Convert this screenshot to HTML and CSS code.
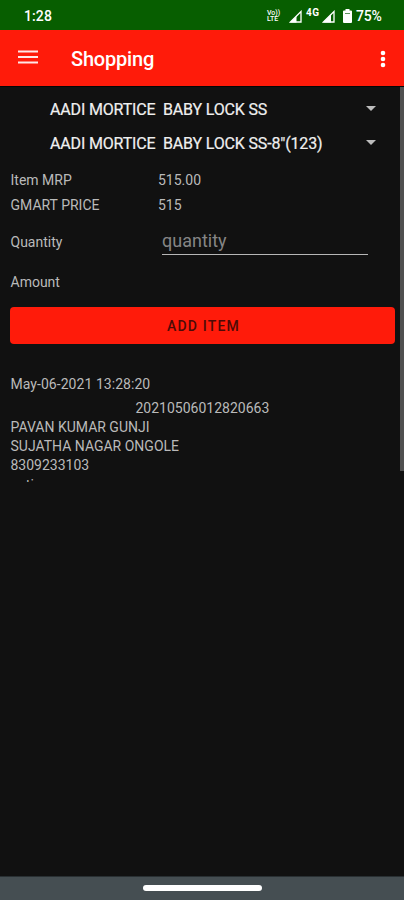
FILE: index.html
```
<!DOCTYPE html>
<html lang="en">
<head>
<meta charset="utf-8">
<title>Shopping</title>
<link rel="stylesheet" href="styles.css">
</head>
<body>
<div class="screen">
  <div class="status">
    <span class="clock">1:28</span>
    <span class="volte"><span>Vo))</span><span class="lte">LTE</span></span>
    <svg class="signal" width="13" height="13" viewBox="0 0 13 13"><path d="M1.5 12H12V1.5Z" fill="none" stroke="#fff" stroke-width="1.3"/><path d="M1 12.5 7.5 6V12.5Z" fill="#fff"/></svg>
    <span class="network">4G</span>
    <svg class="signal-two" width="13" height="13" viewBox="0 0 13 13"><path d="M1.5 12H12V1.5Z" fill="none" stroke="#fff" stroke-width="1.3"/><path d="M1 12.5 9 4.5V12.5Z" fill="#fff"/></svg>
    <svg class="battery" width="9" height="14" viewBox="0 0 9 14"><path d="M2.5 0h4v1.5H8a1 1 0 0 1 1 1V13a1 1 0 0 1-1 1H1a1 1 0 0 1-1-1V2.500a1 1 0 0 1 1-1h1.500Z" fill="#fff"/><path d="M2 4.500h5" stroke="#5c935c" stroke-width="1"/></svg>
    <span class="percent">75%</span>
  </div>
  <header class="appbar">
    <svg class="menu" width="20" height="14" viewBox="0 0 20 14"><path d="M0 1.500H20M0 7H20M0 12.500H20" stroke="#fff" stroke-opacity=".9" stroke-width="2"/></svg>
    <h1 class="title">Shopping</h1>
    <svg class="more" width="6" height="18" viewBox="0 0 6 18"><g fill="#fff"><circle cx="3" cy="3" r="2.300"/><circle cx="3" cy="9" r="2.300"/><circle cx="3" cy="15" r="2.300"/></g></svg>
  </header>
  <main class="content">
    <div class="spinner first"><span>AADI MORTICE&nbsp; BABY LOCK SS</span><i class="caret"></i></div>
    <div class="spinner"><span>AADI MORTICE&nbsp; BABY LOCK SS-8"(123)</span><i class="caret"></i></div>
    <div class="field mrp"><span>Item MRP</span><span>515.00</span></div>
    <div class="field price"><span>GMART PRICE</span><span>515</span></div>
    <div class="field quantity"><span>Quantity</span><span class="input">quantity</span></div>
    <div class="field amount"><span>Amount</span></div>
    <div class="button">ADD ITEM</div>
    <div class="date">May-06-2021 13:28:20</div>
    <div class="order">20210506012820663</div>
    <div class="line">PAVAN KUMAR GUNJI</div>
    <div class="line">SUJATHA NAGAR ONGOLE</div>
    <div class="line phone">8309233103</div>
    <div class="line">native</div>
    <div class="scrollbar"></div>
  </main>
  <footer class="navbar"><div class="handle"></div></footer>
</div>
</body>
</html>
```
FILE: styles.css
```
* { box-sizing: border-box; }
body { margin: 0; background: #111; font-family: Roboto, "Liberation Sans", sans-serif; }
.screen { width: 404px; height: 900px; display: flex; flex-direction: column; background: #111; overflow: hidden; }
.status { height: 30px; flex: none; display: flex; align-items: center; padding: 2px 0 0 24px; background: #075e00; color: #fff; }
.clock { width: 243px; font-size: 14px; font-weight: 500; letter-spacing: 0.1px; }
.volte { width: 15px; display: flex; flex-direction: column; font-size: 7px; line-height: 6px; font-weight: 500; white-space: nowrap; }
.signal { margin-left: 7px; }
.network { width: 15px; margin: -6px 0 0 4px; font-size: 10px; font-weight: 700; line-height: 10px; letter-spacing: 0.5px; }
.signal-two { margin-left: 1px; }
.battery { margin-left: 8px; }
.percent { margin-left: 4px; font-size: 14px; font-weight: 500; letter-spacing: -0.2px; }
.appbar { height: 56px; flex: none; display: flex; align-items: center; padding: 2px 18px 0 18px; background: #ff1b0a; color: #fff; }
.menu { width: 20px; margin-top: -4px; }
.title { margin: 0 0 0 33px; font-size: 20px; font-weight: 500; letter-spacing: -0.2px; }
.more { margin-left: auto; }
.content { position: relative; height: 396px; flex: none; overflow: hidden; padding: 5px 9px 0 10px; border-top: 1px solid #060606; color: #bababa; font-size: 14px; }
.spinner { height: 34px; display: flex; align-items: center; justify-content: space-between; padding: 0 19px 0 40px; color: #f0f0f0; font-size: 16px; letter-spacing: -0.16px; white-space: nowrap; -webkit-text-stroke: 0.2px #f0f0f0; }
.caret { width: 10px; height: 5px; margin-top: -1px; background: #bdbdbd; clip-path: polygon(0 0, 100% 0, 50% 100%); }
.field { display: grid; grid-template-columns: 148px 1fr; align-items: center; height: 24px; }
.mrp { margin-top: 8px; }
.price { padding-top: 1px; }
.quantity { height: 37px; margin-top: 7px; grid-template-columns: 152px 206px; }
.input { height: 25px; align-self: start; margin-top: 7px; border-bottom: 1px solid #b7b7b7; color: #858585; font-size: 18px; line-height: 21px; }
.amount { height: 40px; margin-top: 2px; }
.button { height: 37px; display: flex; align-items: center; justify-content: center; margin-top: 5px; padding-left: 2px; border-radius: 4px; background: #ff1b0a; color: #4d0b07; font-size: 14px; font-weight: 500; letter-spacing: 1.2px; }
.date { margin-top: 30px; line-height: 20px; letter-spacing: 0.05px; }
.order { margin-top: 4px; padding-left: 125px; line-height: 20px; }
.line { line-height: 19px; }
.phone { margin-bottom: 1px; }
.field > span:first-child, .date, .order, .line { text-indent: 0.5px; }
.scrollbar { position: absolute; top: 0; right: 0; width: 4px; height: 384px; background: #505050; }
.navbar { height: 24px; margin-top: auto; flex: none; display: flex; justify-content: center; padding-top: 8px; background: #454e52; border-top: 1px solid #293033; }
.handle { width: 119px; height: 6px; border-radius: 3px; background: #fff; }
```
